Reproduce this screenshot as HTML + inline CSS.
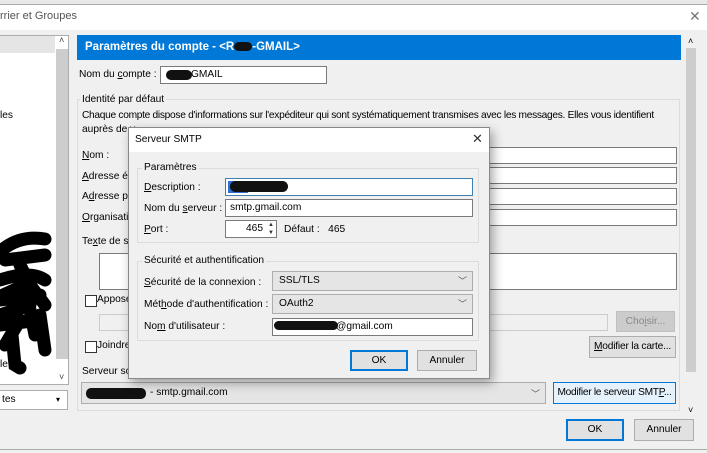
<!DOCTYPE html>
<html><head><meta charset="utf-8"><style>
*{margin:0;padding:0;box-sizing:border-box}
body{width:707px;height:453px;overflow:hidden;background:#f0f0f0;font-family:"Liberation Sans",sans-serif;font-size:10.2px;color:#000;position:relative}
.a{position:absolute;white-space:nowrap}
.in{position:absolute;background:#fff;border:1px solid #7a7a7a;white-space:nowrap}
.btn{position:absolute;background:#e1e1e1;border:1px solid #adadad;text-align:center;line-height:19px;white-space:nowrap}
.sel{position:absolute;background:#e5e5e5;border:1px solid #adadad;padding-left:6px;line-height:18px;white-space:nowrap}
.grp{position:absolute;border:1px solid #dcdcdc}
.chev{position:absolute;right:5px;top:0;color:#555;font-size:9px}
.cb{position:absolute;width:12px;height:12px;background:#fff;border:1px solid #333}
u{text-decoration:underline}
</style></head><body>
<div class="a" style="left:0;top:0;width:707px;height:5px;background:#e8e8e8;border-bottom:1px solid #aaa"></div>
<div class="a" style="left:0;top:5px;width:707px;height:25px;background:#fff"></div>
<div class="a" style="left:0;top:10px;font-size:11px;color:#555">rrier et Groupes</div>
<div class="a" style="left:689px;top:8px;font-size:14px;color:#777">✕</div>

<div class="a" style="left:0;top:35px;width:69px;height:350px;background:#fff;border:1px solid #adadad;border-left:none"></div>
<div class="a" style="left:0;top:36px;width:55px;height:17px;background:#e5e5e5"></div>
<div class="a" style="left:56px;top:49px;width:12px;height:310px;background:#cdcdcd"></div>
<div class="a" style="left:59px;top:35px;font-size:9px;color:#444">˄</div>
<div class="a" style="left:59px;top:372px;font-size:9px;color:#444">˅</div>
<div class="a" style="left:0;top:110px">les</div>
<div class="a" style="left:0;top:359px">le</div>
<svg class="a" style="left:0;top:225px" width="60" height="150"><path d="M2 25 Q20 10 45 14 M5 35 L45 30 M20 40 L30 60 M0 55 Q30 45 45 55 M3 70 L25 60 L35 110 M0 90 L30 80 M5 120 L20 95 M40 90 L45 125 M12 110 L15 140 L20 143 M0 75 L40 70 M0 100 L40 95 M30 60 L45 80" stroke="#000" stroke-width="13" fill="none" stroke-linecap="round"/></svg>
<div class="a" style="left:0;top:390px;width:68px;height:20px;background:#fff;border:1px solid #adadad;border-left:none;padding-left:2px;line-height:18px">tes<span style="position:absolute;left:56px;font-size:8px">▾</span></div>

<div class="a" style="left:77px;top:35px;width:604px;height:25px;background:#0078d7;color:#fff;font-weight:bold;font-size:11.5px;padding-left:8px;line-height:25px">Paramètres du compte - &lt;R<span style="display:inline-block;width:18px;height:9px;background:#111;border-radius:6px;vertical-align:middle"></span>-GMAIL&gt;</div>
<div class="a" style="left:686px;top:48px;width:10px;height:324px;background:#cdcdcd"></div>
<div class="a" style="left:688px;top:36px;font-size:9px">˄</div>
<div class="a" style="left:688px;top:405px;font-size:9px">˅</div>

<div class="a" style="left:79px;top:69px">Nom du <u>c</u>ompte :</div>
<div class="in" style="left:160px;top:66px;width:167px;height:18px;padding-left:30px;line-height:16px">GMAIL</div>
<div class="a" style="left:166px;top:70px;width:26px;height:10px;background:#111;border-radius:6px"></div>

<div class="grp" style="left:77px;top:99px;width:603px;height:312px"></div>
<div class="a" style="left:80px;top:94px;background:#f0f0f0;padding:0 2px">Identité par défaut</div>
<div class="a" style="left:82px;top:110px;letter-spacing:-0.3px">Chaque compte dispose d'informations sur l'expéditeur qui sont systématiquement transmises avec les messages. Elles vous identifient</div>
<div class="a" style="left:82px;top:124px">auprès de v</div>
<div class="a" style="left:82px;top:150px"><u>N</u>om :</div>
<div class="a" style="left:82px;top:171px"><u>A</u>dresse éle</div>
<div class="a" style="left:82px;top:191px">A<u>d</u>resse po</div>
<div class="a" style="left:82px;top:212px"><u>O</u>rganisati</div>
<div class="a" style="left:82px;top:236px">Te<u>x</u>te de si</div>
<div class="in" style="left:488px;top:147px;width:189px;height:17px"></div>
<div class="in" style="left:488px;top:167px;width:189px;height:17px"></div>
<div class="in" style="left:488px;top:188px;width:189px;height:17px"></div>
<div class="in" style="left:488px;top:209px;width:189px;height:17px"></div>
<div class="in" style="left:99px;top:253px;width:578px;height:37px"></div>
<div class="cb" style="left:85px;top:295px"></div>
<div class="a" style="left:97px;top:294px">Appose</div>
<div class="a" style="left:99px;top:314px;width:509px;height:17px;border:1px solid #ccc;background:#f0f0f0"></div>
<div class="btn" style="left:616px;top:311px;width:59px;height:21px;background:#ccc;border-color:#bfbfbf;color:#888">Cho<u>i</u>sir...</div>
<div class="btn" style="left:589px;top:336px;width:87px;height:22px;letter-spacing:-0.2px"><u>M</u>odifier la carte...</div>
<div class="cb" style="left:85px;top:341px"></div>
<div class="a" style="left:97px;top:340px">Joindre</div>
<div class="a" style="left:82px;top:366px">Serveur so</div>
<div class="sel" style="left:81px;top:382px;width:465px;height:22px;line-height:20px;padding-left:68px">- smtp.gmail.com<span class="chev" style="top:1px">﹀</span></div>
<div class="a" style="left:86px;top:388px;width:60px;height:11px;background:#111;border-radius:5px"></div>
<div class="btn" style="left:553px;top:382px;width:123px;height:22px;background:#e5f1fb;border-color:#0078d7;letter-spacing:-0.3px">Modifier le serveur SMT<u>P</u>...</div>

<div class="btn" style="left:566px;top:419px;width:58px;height:22px;border:2px solid #0078d7;line-height:18px">OK</div>
<div class="btn" style="left:634px;top:419px;width:60px;height:22px">Annuler</div>
<div class="a" style="left:0;top:449px;width:707px;height:1px;background:#aaa"></div>

<div class="a" style="left:128px;top:127px;width:362px;height:252px;background:#f0f0f0;border:1px solid #888;box-shadow:3px 4px 10px rgba(0,0,0,.35)"></div>
<div class="a" style="left:129px;top:128px;width:360px;height:24px;background:#fff"></div>
<div class="a" style="left:135px;top:134px">Serveur SMTP</div>
<div class="a" style="left:472px;top:131px;font-size:13px;color:#333">✕</div>

<div class="grp" style="left:137px;top:168px;width:342px;height:75px"></div>
<div class="a" style="left:142px;top:162px;background:#f0f0f0;padding:0 2px">Paramètres</div>
<div class="a" style="left:144px;top:182px"><u>D</u>escription :</div>
<div class="in" style="left:225px;top:178px;width:248px;height:18px;border-color:#3c7fb1"></div>
<div class="a" style="left:228px;top:181px;width:20px;height:12px;background:#2a6fd6"></div>
<div class="a" style="left:230px;top:181px;width:58px;height:11px;background:#111;border-radius:6px"></div>
<div class="a" style="left:144px;top:203px">Nom du <u>s</u>erveur :</div>
<div class="in" style="left:225px;top:199px;width:248px;height:18px;padding-left:4px;line-height:16px">smtp.gmail.com</div>
<div class="a" style="left:144px;top:224px"><u>P</u>ort :</div>
<div class="in" style="left:225px;top:220px;width:52px;height:18px;text-align:right;padding-right:13px;line-height:16px">465</div>
<div class="a" style="left:266px;top:221px;width:10px;height:16px;font-size:6px;line-height:8px;text-align:center;color:#333">▲<br>▼</div>
<div class="a" style="left:284px;top:224px">Défaut :&nbsp;&nbsp;&nbsp;465</div>

<div class="grp" style="left:137px;top:261px;width:342px;height:80px"></div>
<div class="a" style="left:142px;top:255px;background:#f0f0f0;padding:0 2px">Sécurité et authentification</div>
<div class="a" style="left:144px;top:277px"><u>S</u>écurité de la connexion :</div>
<div class="sel" style="left:272px;top:271px;width:201px;height:20px">SSL/TLS<span class="chev">﹀</span></div>
<div class="a" style="left:144px;top:299px">Mét<u>h</u>ode d'authentification :</div>
<div class="sel" style="left:272px;top:294px;width:201px;height:20px">OAuth2<span class="chev">﹀</span></div>
<div class="a" style="left:144px;top:321px">No<u>m</u> d'utilisateur :</div>
<div class="in" style="left:272px;top:318px;width:201px;height:18px;padding-left:63px;line-height:16px">@gmail.com</div>
<div class="a" style="left:274px;top:321px;width:64px;height:9px;background:#111;border-radius:5px"></div>
<div class="btn" style="left:350px;top:350px;width:58px;height:21px;border:2px solid #0078d7;line-height:17px">OK</div>
<div class="btn" style="left:417px;top:350px;width:60px;height:21px">Annuler</div>
</body></html>
